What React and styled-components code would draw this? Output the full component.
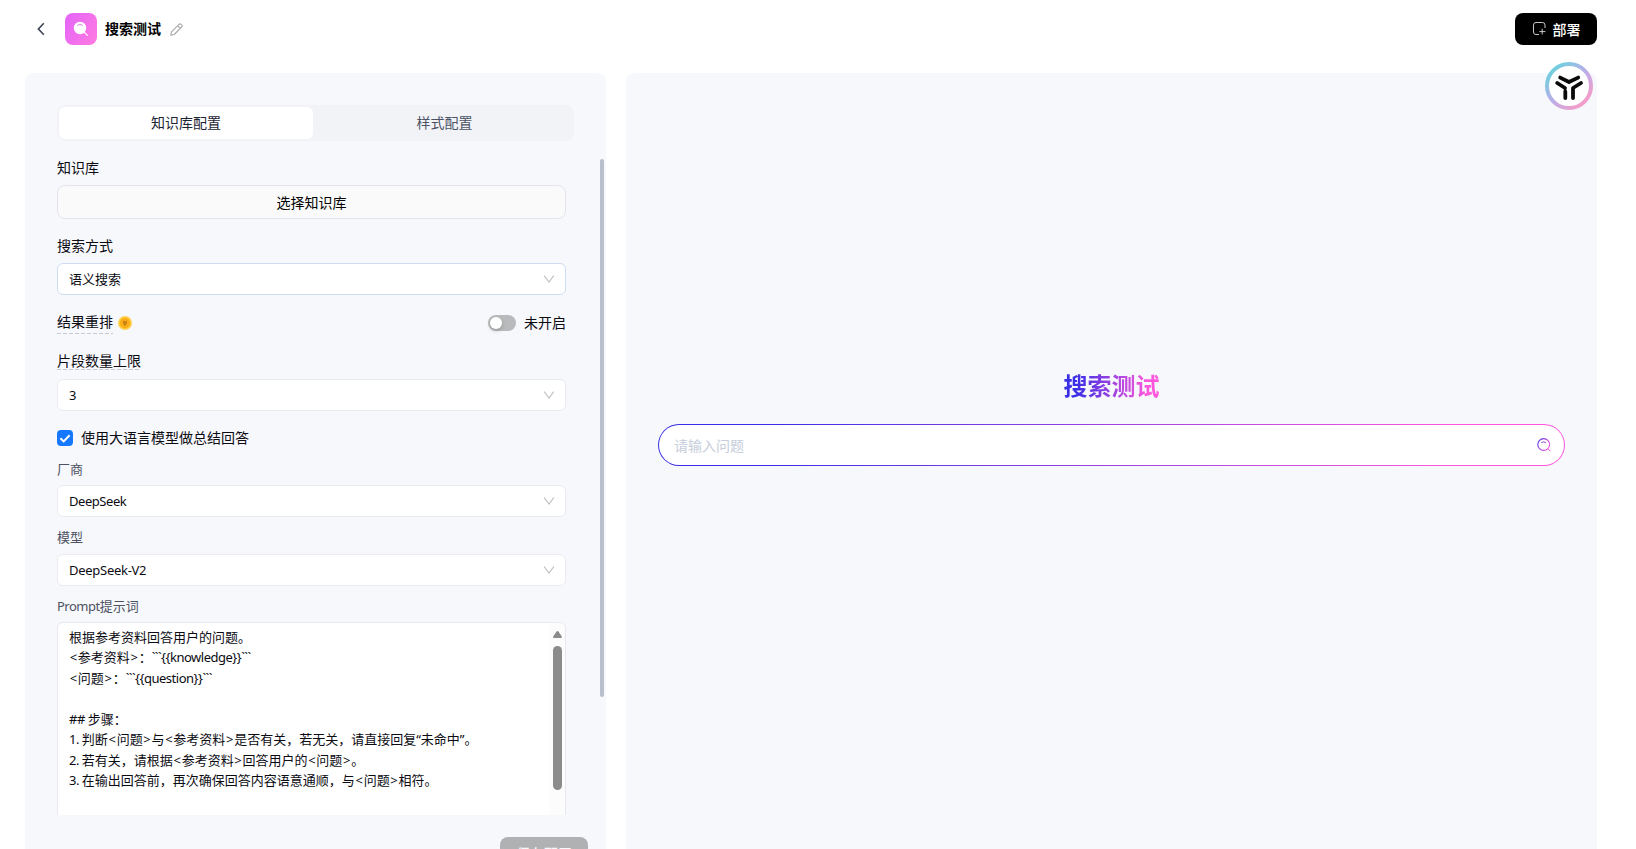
import React from "react";
import styled, { createGlobalStyle, css } from "styled-components";

const Global = createGlobalStyle`
  *, *::before, *::after { box-sizing: border-box; }
  html, body { margin: 0; padding: 0; background: #fff; overflow: hidden; }
  body {
    font-family: "Noto Sans", "Noto Sans CJK SC", sans-serif;
    font-size: 14px;
    color: #0b0b12;
  }
  button, input, textarea { font: inherit; }
`;

const Page = styled.div`
  height: 849px;
  display: flex;
  flex-direction: column;
  overflow: hidden;
  position: relative;
`;

const Header = styled.header`
  height: 73px;
  padding: 13px 39px 0 33px;
  display: flex;
  align-items: flex-start;
  justify-content: space-between;
  flex: none;
`;

const HeaderLeft = styled.div`
  height: 32px;
  display: flex;
  align-items: center;
`;

const BackButton = styled.button`
  width: 16px;
  height: 16px;
  margin: 0 16px 0 0;
  padding: 0;
  border: 0;
  background: none;
  display: flex;
`;

const AppLogo = styled.div`
  width: 32px;
  height: 32px;
  border-radius: 8px;
  background: linear-gradient(120deg, #e364f8, #ff7ae0);
`;

const AppName = styled.h1`
  margin: 0 9px 0 8px;
  font-size: 14px;
  line-height: 20px;
  font-weight: 700;
  color: #000;
`;

const DeployButton = styled.button`
  width: 82px;
  height: 32px;
  padding: 0 0 1px 1px;
  border: 0;
  border-radius: 8px;
  background: #000;
  color: #fff;
  font-weight: 500;
  display: flex;
  align-items: center;
  justify-content: center;
  gap: 7px;
`;

const Main = styled.main`
  flex: 1;
  min-height: 0;
  padding: 0 39px 0 25px;
  display: flex;
  gap: 20px;
`;

const panel = css`
  background: #f7f8fc;
  border-radius: 8px 8px 0 0;
`;

const ConfigPanel = styled.section`
  ${panel}
  width: 581px;
  flex: none;
  padding: 32px 2px 0 32px;
  display: flex;
  flex-direction: column;
`;

const Tabs = styled.div`
  width: 517px;
  height: 36px;
  flex: none;
  padding: 2px;
  border-radius: 8px;
  background: #f2f3f7;
  display: flex;
`;

const Tab = styled.div`
  width: ${(p) => (p.$active ? "254px" : "259px")};
  border-radius: 6px;
  background: ${(p) => (p.$active ? "#fff" : "transparent")};
  color: ${(p) => (p.$active ? "#1d2333" : "#4b5265")};
  display: flex;
  align-items: center;
  justify-content: center;
  line-height: 20px;
  padding: 0 0 1px ${(p) => (p.$active ? 0 : 4)}px;
`;

const ScrollArea = styled.div`
  height: 656px;
  margin-top: 18px;
  flex: none;
  display: flex;
  justify-content: space-between;
  overflow: hidden;
`;

const Form = styled.div`
  width: 509px;
`;

const ScrollThumb = styled.div`
  width: 4px;
  height: 538px;
  border-radius: 2px;
  background: #b8bfcd;
`;

const Label = styled.div`
  height: ${(p) => p.$h}px;
  padding-top: ${(p) => p.$top || 0}px;
  display: flex;
  align-items: center;
  line-height: 20px;
  font-size: ${(p) => (p.$muted ? 13 : 14)}px;
  color: ${(p) => (p.$muted ? "#4e5262" : "#0b0b12")};
`;

const Hint = styled.span`
  height: ${(p) => p.$h}px;
  line-height: 20px;
  background: repeating-linear-gradient(90deg, #c6cad3 0 4px, transparent 4px 6px) left bottom / 100% 1px no-repeat;
`;

const PickButton = styled.button`
  width: 100%;
  height: 34px;
  margin-top: 8px;
  padding: 0 0 1px;
  border: 1px solid #e4e5ec;
  border-radius: 8px;
  background: #fafafa;
  color: #000;
  display: block;
`;

const SelectBox = styled.div`
  height: 32px;
  padding: 0 10px 0 11px;
  border: 1px solid ${(p) => (p.$focus ? "#cddcf2" : "#ebecf0")};
  border-radius: 6px;
  background: #fff;
  font-size: 13px;
  line-height: 18px;
  letter-spacing: ${(p) => p.$tracking || 0}px;
  display: flex;
  align-items: center;
  justify-content: space-between;
`;

const SwitchRow = styled.div`
  height: 36px;
  margin-top: 10px;
  display: flex;
  align-items: center;
  justify-content: space-between;
`;

const RowGroup = styled.div`
  display: flex;
  align-items: center;
  gap: ${(p) => p.$gap}px;
  line-height: 20px;
`;

const Toggle = styled.div`
  width: 28px;
  height: 16px;
  padding: 2px;
  border-radius: 8px;
  background: #b9babc;
  &::before {
    content: "";
    display: block;
    width: 12px;
    height: 12px;
    border-radius: 50%;
    background: #fff;
    box-shadow: 0 2px 4px rgba(0, 35, 11, 0.2);
  }
`;

const CheckRow = styled.div`
  margin-top: 19px;
  height: 16px;
  display: flex;
  align-items: center;
  gap: 8px;
  line-height: 20px;
`;

const CheckMark = styled.span`
  width: 16px;
  height: 16px;
  border-radius: 4px;
  background: #1677ff;
  display: flex;
`;

const PromptBox = styled.div`
  height: 240px;
  border: 1px solid #e8e9ed;
  border-radius: 6px;
  background: #fff;
  display: flex;
  justify-content: space-between;
`;

const PromptText = styled.div`
  padding: 4px 0 0 11px;
  font-size: 13px;
  line-height: 20.43px;
  white-space: pre;
`;

const Latin = styled.span`
  letter-spacing: -0.5px;
`;

const Bracket = styled.span`
  padding: 0 0.7px;
`;

const PromptTrack = styled.div`
  width: 15px;
  padding-top: 8px;
  border-radius: 0 6px 0 0;
  background: #fcfcfc;
  display: flex;
  flex-direction: column;
  align-items: center;
  gap: 8px;
`;

const PromptThumb = styled.div`
  width: 9px;
  height: 144px;
  border-radius: 5px;
  background: #8b8b8b;
`;

const SaveButton = styled.button`
  width: 88px;
  height: 32px;
  margin: 22px 16px 0 auto;
  padding: 0;
  border: 0;
  border-radius: 8px;
  background: #b0b1b3;
  color: #f7f8fc;
  font-weight: 500;
  flex: none;
`;

const PreviewPanel = styled.section`
  ${panel}
  flex: 1;
  padding: 293px 32px 0;
`;

const PreviewTitle = styled.h2`
  width: max-content;
  margin: 0 auto;
  font-size: 24px;
  line-height: 40px;
  font-weight: 700;
  background: linear-gradient(90deg, #3a2ee6 12%, #ff57dc 88%);
  background-clip: text;
  -webkit-background-clip: text;
  color: transparent;
`;

const SearchFrame = styled.div`
  height: 42px;
  margin-top: 18px;
  padding: 1px;
  border-radius: 21px;
  background: linear-gradient(90deg, #3a2ee6 12%, #ff57dc 88%);
`;

const SearchBox = styled.div`
  height: 40px;
  padding: 0 13px 0 15px;
  border-radius: 20px;
  background: #fff;
  display: flex;
  align-items: center;
  justify-content: space-between;
  color: #c6cddb;
`;

const Assistant = styled.div`
  position: absolute;
  left: 1545px;
  top: 62px;
  width: 48px;
  height: 48px;
`;

const Chevron = () => (
  <svg width="12" height="10" viewBox="0 0 12 10" fill="none" stroke="#bfbfbf" strokeWidth="1.1">
    <path d="M1.2 1.6 6 8 10.8 1.6" />
  </svg>
);

const Select = ({ value, focus, tracking }) => (
  <SelectBox $focus={focus} $tracking={tracking}>
    <span>{value}</span>
    <Chevron />
  </SelectBox>
);

const PROMPT = [
  "根据参考资料回答用户的问题。",
  "<参考资料>：```{{knowledge}}```",
  "<问题>：```{{question}}```",
  "",
  "## 步骤：",
  "1. 判断<问题>与<参考资料>是否有关，若无关，请直接回复“未命中”。",
  "2. 若有关，请根据<参考资料>回答用户的<问题>。",
  "3. 在输出回答前，再次确保回答内容语意通顺，与<问题>相符。",
].join("\n");

const renderPrompt = (text) =>
  text.split(/([<>]|[`{}a-z#0-9. ]+)/).map((part, i) => {
    if (i % 2 === 0) return part;
    return part === "<" || part === ">" ? (
      <Bracket key={i}>{part}</Bracket>
    ) : (
      <Latin key={i}>{part}</Latin>
    );
  });

export default function App() {
  return (
    <Page>
      <Global />
      <Header>
        <HeaderLeft>
          <BackButton aria-label="back">
            <svg width="16" height="16" viewBox="0 0 16 16" fill="none" stroke="#3c4353" strokeWidth="1.6">
              <path d="M10.8 2.2 5.4 8l5.4 5.8" />
            </svg>
          </BackButton>
          <AppLogo>
            <svg width="32" height="32" viewBox="0 0 32 32" fill="none">
              <circle cx="15" cy="15" r="6.2" fill="#fff" />
              <path d="M19 19 22.4 22.4" stroke="#fff" strokeWidth="1.1" strokeLinecap="round" />
              <path d="M12.6 12.4Q15 10.6 17.4 12.4" stroke="#d98be0" strokeWidth="1.1" strokeLinecap="round" />
            </svg>
          </AppLogo>
          <AppName>搜索测试</AppName>
          <svg width="13" height="13" viewBox="0 0 13 13" fill="none" stroke="#a9a9ab" strokeWidth="1.1" strokeLinejoin="round">
            <path d="M.8 12.2 1.5 8.8 9 1.3Q10 .5 11 1.3L11.8 2.1Q12.6 3 11.7 4L4.2 11.5ZM7.7 2.7 10.3 5.3" />
          </svg>
        </HeaderLeft>
        <DeployButton>
          <svg width="13" height="13" viewBox="0 0 13 13" fill="none" stroke="#c8c8c8" strokeWidth="1">
            <path d="M6 12.5H3Q.5 12.5 .5 10V3Q.5 .5 3 .5H9.5Q12 .5 12 3V6M9.2 6.8V12.4M6.4 9.6H12.4" />
          </svg>
          部署
        </DeployButton>
      </Header>
      <Main>
        <ConfigPanel>
          <Tabs>
            <Tab $active>知识库配置</Tab>
            <Tab>样式配置</Tab>
          </Tabs>
          <ScrollArea>
            <Form>
              <Label $h={18}>知识库</Label>
              <PickButton>选择知识库</PickButton>
              <Label $h={44} $top={10}>搜索方式</Label>
              <Select value="语义搜索" focus />
              <SwitchRow>
                <RowGroup $gap={5}>
                  <Hint $h={22}>结果重排</Hint>
                  <svg width="14" height="14" viewBox="0 0 14 14">
                    <circle cx="7" cy="7" r="7" fill="#fdd04b" />
                    <circle cx="7" cy="7" r="5.3" fill="#fbae17" />
                    <path d="M4.8 4.6 6 5.1h2l1.2-.5-.4 2.8L7.6 9.8H6.4L5.2 7.4Z" fill="#c98214" />
                  </svg>
                </RowGroup>
                <RowGroup $gap={8}>
                  <Toggle />
                  未开启
                </RowGroup>
              </SwitchRow>
              <Label $h={38} $top={1}><Hint $h={19}>片段数量上限</Hint></Label>
              <Select value="3" />
              <CheckRow>
                <CheckMark>
                  <svg width="16" height="16" viewBox="0 0 16 16" fill="none" stroke="#fff" strokeWidth="2">
                    <path d="M3.4 8.2 6.7 11.4 12.6 5.2" />
                  </svg>
                </CheckMark>
                使用大语言模型做总结回答
              </CheckRow>
              <Label $h={39} $top={6} $muted>厂商</Label>
              <Select value="DeepSeek" tracking={-0.45} />
              <Label $h={37} $top={3} $muted>模型</Label>
              <Select value="DeepSeek-V2" tracking={-0.28} />
              <Label $h={36} $top={4} $muted><Latin>Prompt</Latin>提示词</Label>
              <PromptBox>
                <PromptText>{renderPrompt(PROMPT)}</PromptText>
                <PromptTrack>
                  <svg width="9" height="7" viewBox="0 0 9 7">
                    <path d="M4.5 0Q5.2 0 5.8 1L8.8 5.6Q9.2 7 8 7H1Q-.2 7 .2 5.6L3.2 1Q3.8 0 4.5 0Z" fill="#8b8b8b" />
                  </svg>
                  <PromptThumb />
                </PromptTrack>
              </PromptBox>
            </Form>
            <ScrollThumb />
          </ScrollArea>
          <SaveButton>保存配置</SaveButton>
        </ConfigPanel>
        <PreviewPanel>
          <PreviewTitle>搜索测试</PreviewTitle>
          <SearchFrame>
            <SearchBox>
              <span>请输入问题</span>
              <svg width="14" height="14" viewBox="0 0 14 14" fill="none" stroke="url(#searchStroke)" strokeLinecap="round">
                <defs>
                  <linearGradient id="searchStroke" x1="0" y1="0" x2="14" y2="8" gradientUnits="userSpaceOnUse">
                    <stop stopColor="#3a2ee6" />
                    <stop offset="1" stopColor="#ff57dc" />
                  </linearGradient>
                </defs>
                <circle cx="6.7" cy="6.5" r="5.9" strokeWidth="1.1" />
                <path d="M11 10.8 13.2 13M4.6 4.4Q6.7 3 8.8 4.4" />
              </svg>
            </SearchBox>
          </SearchFrame>
        </PreviewPanel>
      </Main>
      <Assistant>
        <svg width="48" height="48" viewBox="0 0 48 48" fill="none">
          <defs>
            <linearGradient id="ring" x1="8" y1="6" x2="40" y2="42" gradientUnits="userSpaceOnUse">
              <stop stopColor="#6ed0de" />
              <stop offset=".5" stopColor="#bcaee8" />
              <stop offset="1" stopColor="#f69cc8" />
            </linearGradient>
          </defs>
          <circle cx="24" cy="24" r="22" fill="#fff" stroke="url(#ring)" strokeWidth="4" />
          <g stroke="#0a0a0a" strokeWidth="3.8" strokeLinecap="round" strokeLinejoin="round">
            <path d="M15.2 15.6 24 20 33.2 15.6M12.2 21 20 26M20.3 29.5V36M36 21 28 26V36" />
            <path d="M20 26V28" strokeWidth="2.4" />
          </g>
        </svg>
      </Assistant>
    </Page>
  );
}
